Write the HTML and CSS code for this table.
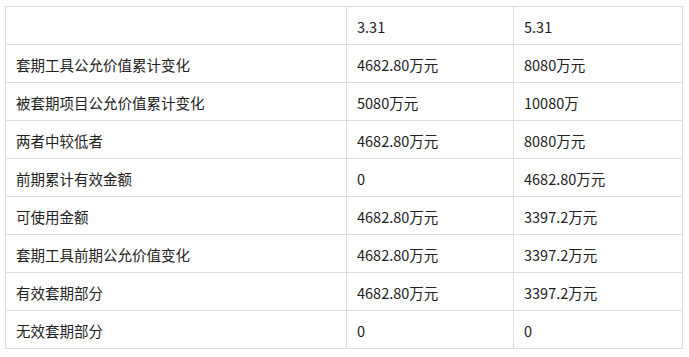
FILE: index.html
```html
<!DOCTYPE html>
<html lang="zh-CN">
<head>
    <meta charset="UTF-8">
    <title>套期有效部分</title>
    <link rel="stylesheet" href="styles.css">
</head>
<body>
    <table class="hedge">
        <tr><td></td><td>3.31</td><td>5.31</td></tr>
        <tr><td>套期工具公允价值累计变化</td><td>4682.80万元</td><td>8080万元</td></tr>
        <tr><td>被套期项目公允价值累计变化</td><td>5080万元</td><td>10080万</td></tr>
        <tr><td>两者中较低者</td><td>4682.80万元</td><td>8080万元</td></tr>
        <tr><td>前期累计有效金额</td><td>0</td><td>4682.80万元</td></tr>
        <tr><td>可使用金额</td><td>4682.80万元</td><td>3397.2万元</td></tr>
        <tr><td>套期工具前期公允价值变化</td><td>4682.80万元</td><td>3397.2万元</td></tr>
        <tr><td>有效套期部分</td><td>4682.80万元</td><td>3397.2万元</td></tr>
        <tr><td>无效套期部分</td><td>0</td><td>0</td></tr>
    </table>
</body>
</html>
```

FILE: styles.css
```css
body {
    margin: 0;
    padding: 6px 0 0 5px;
    background: #fff;
    font-family: "Noto Sans CJK SC", "Liberation Sans", sans-serif;
    font-size: 14.5px;
    color: #222;
}
.hedge {
    border-collapse: collapse;
    width: 677px;
    table-layout: fixed;
}
.hedge td {
    border: 1px solid #dcdcdc;
    height: 38px;
    padding: 2px 10px 0;
    box-sizing: border-box;
    vertical-align: middle;
    line-height: 20px;
}
.hedge td:nth-child(1) { width: 341px; }
.hedge td:nth-child(2) { width: 167px; }
.hedge td:nth-child(3) { width: 169px; }
```
